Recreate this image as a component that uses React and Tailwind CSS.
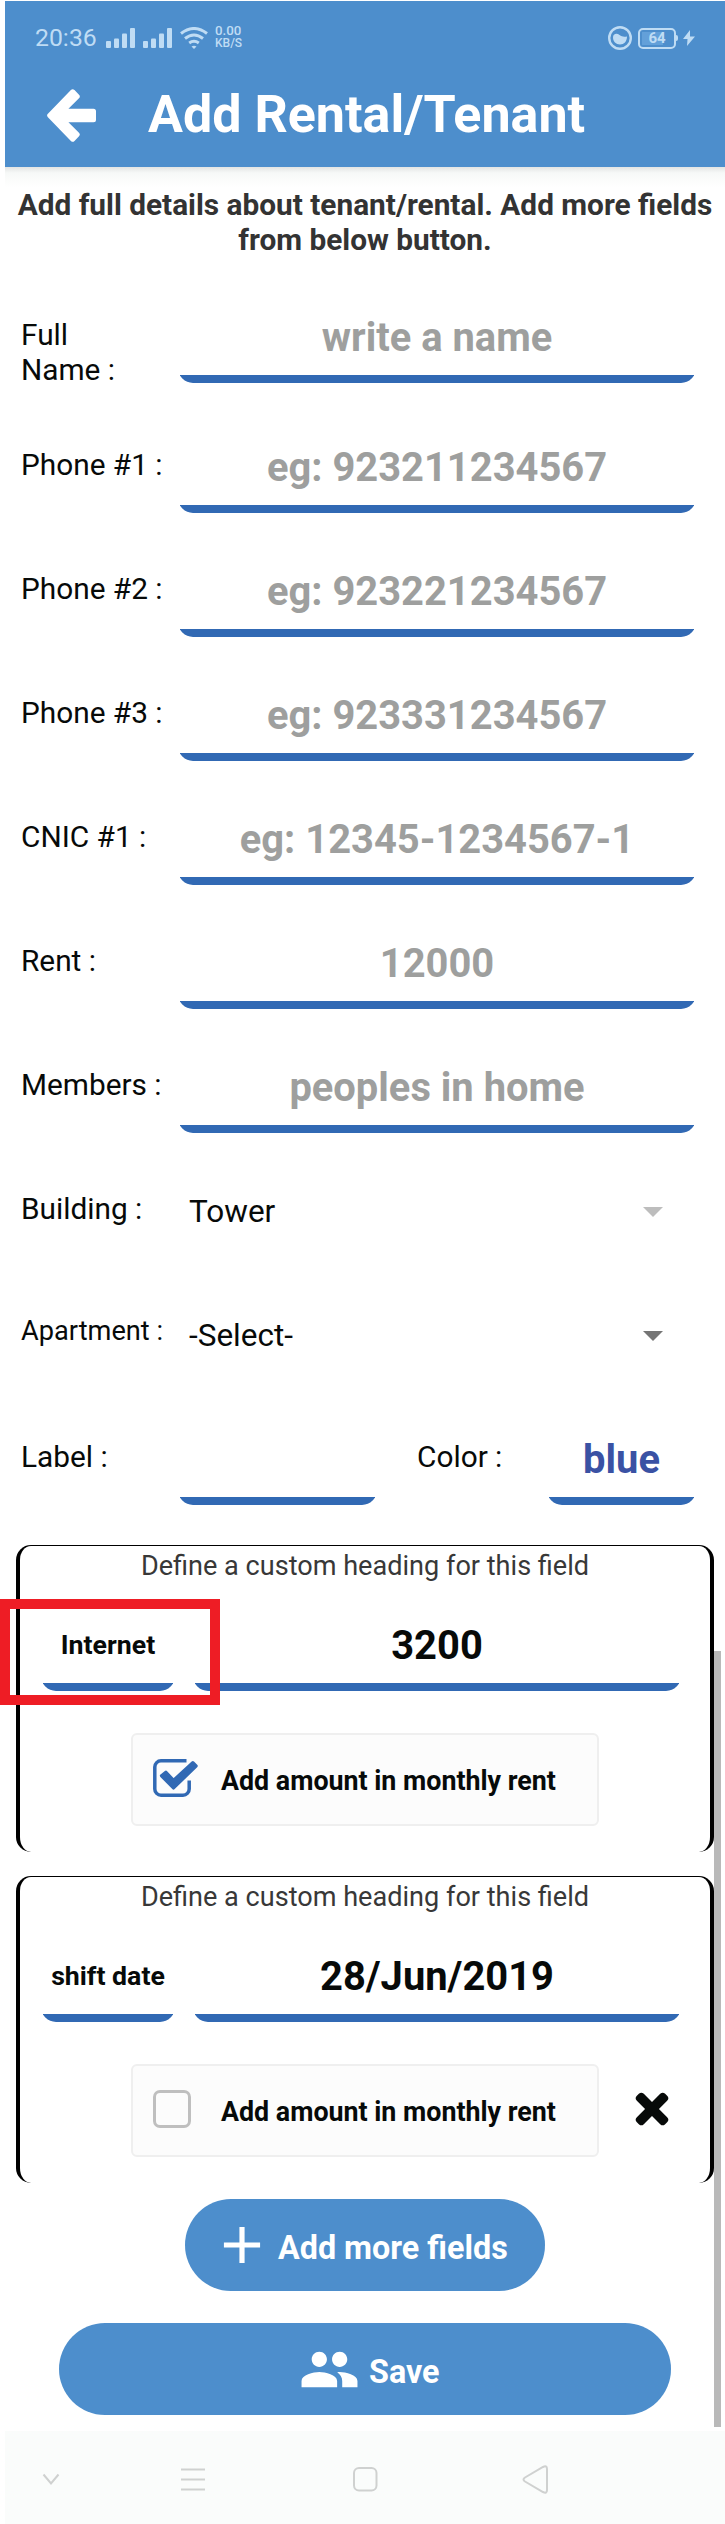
import { MdAdd, MdPeople } from "react-icons/md";

const FIELDS = [
  { label: "Phone #1 :", hint: "eg: 923211234567" },
  { label: "Phone #2 :", hint: "eg: 923221234567" },
  { label: "Phone #3 :", hint: "eg: 923331234567" },
  { label: "CNIC #1 :", hint: "eg: 12345-1234567-1" },
  { label: "Rent :", hint: "12000" },
  { label: "Members :", hint: "peoples in home" },
];

function Underline() {
  return (
    <div className="h-2 shrink-0 overflow-hidden">
      <div className="-mx-[2px] -mt-[22px] h-[30px] rounded-[15px] bg-[#3169b4]" />
    </div>
  );
}

function Input({ className, textClass, children }) {
  return (
    <div className={"flex flex-col " + className}>
      <div className={"flex h-[66px] items-center justify-center whitespace-nowrap pb-[9px] text-[39.9px] leading-[46px] font-bold " + textClass}>
        {children}
      </div>
      <Underline />
    </div>
  );
}

function Label({ className = "w-[159px] text-[29.8px]", children }) {
  return <div className={"mt-[8px] h-[35px] shrink-0 leading-[35px] text-[#070a09] " + className}>{children}</div>;
}

function Field({ label, hint }) {
  return (
    <div className="mt-[50px] flex h-[74px]">
      <Label>{label}</Label>
      <Input className="w-[514px]" textClass="text-[#9e9f9e]">{hint}</Input>
    </div>
  );
}

function SelectRow({ label, labelClass, value, caret }) {
  return (
    <div className="mt-[50px] flex h-[74px]">
      <Label className={labelClass}>{label}</Label>
      <div className="flex h-[58px] w-[514px] items-center pr-[31px] pl-[9px]">
        <span className="grow text-[31.5px] leading-[36px] text-[#070a09]">{value}</span>
        <svg className="h-[10px] w-[20px]" viewBox="0 0 20 10" fill={caret}><path d="M0 0h20L10 10z" /></svg>
      </div>
    </div>
  );
}

function CheckIcon({ checked }) {
  if (!checked) {
    return <div className="h-[38px] w-[38px] shrink-0 rounded-[7px] border-[3.5px] border-[#bfbfbf]" />;
  }
  return (
    <svg className="h-[38px] w-[45px] shrink-0" viewBox="0 0 45 38">
      <path d="M33.500 1.800H8A6.200 6.200 0 0 0 1.800 8v22A6.200 6.200 0 0 0 8 36.200h22A6.200 6.200 0 0 0 36.200 30V21.500" fill="none" stroke="#3169b4" strokeWidth="3.500" />
      <path d="M8.600 16.800L12.900 13.400 20.500 21.500 39.800 3.800 43 7 20.500 28.900z" fill="#3169b4" stroke="#3169b4" strokeWidth="3.400" strokeLinejoin="round" />
    </svg>
  );
}

function CustomCard({ name, value, checked, removable, className }) {
  return (
    <div className={"ml-4 h-[307px] w-[698px] rounded-[15px] border-x-4 border-t border-black bg-white " + className}>
      <div className="mt-[4px] h-[32px] text-center text-[27.1px] leading-[32px] text-[#383838]">Define a custom heading for this field</div>
      <div className="mt-[36px] flex gap-[22px] pl-[23px]">
        <div className="flex w-[130px] flex-col">
          <div className="flex h-[65px] items-center justify-center whitespace-nowrap pb-[11px] text-[26.7px] font-bold text-[#070a09]">{name}</div>
          <Underline />
        </div>
        <Input className="-mt-px w-[484px]" textClass="text-[#070a09]">{value}</Input>
      </div>
      <div className="mt-[42px] flex items-center">
        <div className="ml-[111px] flex h-[93px] w-[468px] items-center rounded-[6px] border-2 border-[#efefef] bg-[#fcfcfc] pl-[20px]">
          <div className="flex w-[68px] -translate-y-[2px]"><CheckIcon checked={checked} /></div>
          <span className="mt-[3px] whitespace-nowrap text-[26.8px] leading-[32px] font-bold text-[#070a09]">Add amount in monthly rent</span>
        </div>
        {removable && (
          <svg className="ml-[36px] h-[34px] w-[34px] -translate-y-[2px]" viewBox="-17 -17 34 34" fill="#070a09">
            <rect x="-20" y="-4.900" width="40" height="9.800" rx="3.500" transform="rotate(45)" />
            <rect x="-20" y="-4.900" width="40" height="9.800" rx="3.500" transform="rotate(-45)" />
          </svg>
        )}
      </div>
    </div>
  );
}

function Signal() {
  return (
    <svg className="h-[20px] w-[29px]" viewBox="0 0 29 20" fill="#bfdcf4">
      <rect x="0" y="13" width="5" height="7" rx="1" />
      <rect x="8" y="10.500" width="5" height="9.500" rx="1" />
      <rect x="16" y="5.500" width="5" height="14.500" rx="1" />
      <rect x="24" y="0" width="5" height="20" rx="1" />
    </svg>
  );
}

function StatusBar() {
  return (
    <div className="flex h-[74px] items-center text-[#bfdcf4]">
      <span className="ml-[30px] w-[71px] text-[24.8px] leading-[28px]">20:36</span>
      <Signal />
      <div className="ml-[8px] flex"><Signal /></div>
      <svg className="ml-[8px] h-[22px] w-[28px]" viewBox="0 0 28 22" fill="none" stroke="#bfdcf4" strokeWidth="3">
        <path d="M1 6.500Q14-3.500 27 6.500M5 11.500q9-7 18 0M9.200 16q4.800-3.500 9.600 0" />
        <path d="M11.500 19.500q2.500-1.500 5 0L14 22z" fill="#bfdcf4" stroke="none" />
      </svg>
      <div className="ml-[7px] w-[30px] -translate-y-[1px] font-medium">
        <div className="h-[12px] text-[13.3px] leading-[12px]">0.00</div>
        <div className="h-[12px] text-[12px] leading-[12px]">KB/S</div>
      </div>
      <svg className="ml-[363px] h-[24px] w-[24px]" viewBox="0 0 24 24">
        <circle cx="12" cy="12" r="10.800" fill="none" stroke="#bfdcf4" strokeWidth="2.400" />
        <path d="M5 11.500c0-4 4-4.500 6.500-2.500 2.500 2 4.500 1.800 7.500 1.500 0 5-3 8-7 8s-7-3-7-7z" fill="#bfdcf4" />
      </svg>
      <div className="ml-[6px] h-[21px] w-[38px] rounded-[5px] border-2 border-[#bfdcf4] p-[2px]">
        <div className="flex h-[13px] items-center justify-center bg-linear-to-r from-[#63a0d9] from-70% to-[#4d8ecc] to-70% text-[15px] leading-none font-bold">64</div>
      </div>
      <div className="h-[6px] w-[2px] rounded-r bg-[#bfdcf4]" />
      <svg className="ml-[5px] h-[16px] w-[12px]" viewBox="0 0 12 16" fill="#bfdcf4"><path d="M7 0L0 9h4.500L4 16l8-9.500H7z" /></svg>
    </div>
  );
}

export default function App() {
  return (
    <div className="relative flex h-[2524px] w-[725px] flex-col overflow-hidden bg-white font-['Roboto',sans-serif] text-black">
      <header className="mt-px ml-[5px] h-[166px] shrink-0 bg-[#4d8ecc]">
        <StatusBar />
        <div className="flex h-[80px] items-center pl-[42px]">
          <svg className="h-[53px] w-[49px]" viewBox="0 0 49 53">
            <path d="M2.700 26.500L25.700 2.800 30.200 7.500 15.400 22.300H46.500V30.700H15.400L30.200 45.500 25.700 50.200z" fill="#fff" stroke="#fff" strokeWidth="5" strokeLinejoin="round" />
          </svg>
          <h1 className="ml-[52px] text-[52px] leading-[60px] font-bold whitespace-nowrap text-white">Add Rental/Tenant</h1>
        </div>
      </header>
      <div className="ml-[5px] h-[20px] shrink-0 bg-linear-to-b from-[#e2e4e3] via-[#f7f9f8] via-30% to-white" />
      <p className="ml-[5px] text-center text-[29.8px] leading-[35px] font-bold whitespace-nowrap text-[#333]">
        Add full details about tenant/rental. Add more fields<br />from below button.
      </p>

      <section className="mt-[52px] h-[1196px] shrink-0 pl-[21px]">
        <div className="flex h-[74px]">
          <Label>Full<br />Name :</Label>
          <Input className="w-[514px]" textClass="text-[#9e9f9e]">write a name</Input>
        </div>
        <div className="h-[6px]" />
        {FIELDS.map((f) => <Field key={f.label} {...f} />)}
        <SelectRow label="Building :" labelClass="w-[159px] text-[29.8px]" value="Tower" caret="#bdbdbd" />
        <SelectRow label="Apartment :" labelClass="w-[159px] text-[27.2px] -translate-y-[1px]" value="-Select-" caret="#757575" />
        <div className="mt-[50px] flex h-[74px]">
          <Label>Label :</Label>
          <Input className="w-[195px]" textClass="" />
          <Label className="ml-[42px] w-[132px] text-[29.8px]">Color :</Label>
          <Input className="w-[145px]" textClass="text-[#3a52a4]">blue</Input>
        </div>
      </section>

      <CustomCard className="mt-[40px] shrink-0" name="Internet" value="3200" checked />
      <CustomCard className="mt-[24px] shrink-0" name="shift date" value="28/Jun/2019" removable />

      <button className="mt-[16px] ml-[185px] flex h-[92px] w-[360px] shrink-0 items-center rounded-full bg-[#4d8ecc] pl-[26px] text-[32.3px] font-bold text-white">
        <MdAdd className="h-[62px] w-[62px] shrink-0" />
        <span className="mt-[6px] ml-[5px] whitespace-nowrap">Add more fields</span>
      </button>
      <button className="mt-[32px] ml-[59px] flex h-[92px] w-[612px] shrink-0 items-center rounded-full bg-[#4d8ecc] pl-[240px] text-[32.3px] font-bold text-white">
        <MdPeople className="h-[61px] w-[61px] shrink-0" />
        <span className="mt-[6px] ml-[9px]">Save</span>
      </button>

      <nav className="mt-[16px] ml-[5px] flex h-[93px] shrink-0 bg-[#fafcfb]">
        <svg className="h-[93px] w-[720px]" viewBox="5 2431 720 93" fill="none" stroke="#cfd1d0" strokeWidth="2">
          <path d="M43.500 2474.500l7.500 9 7.500-9M181 2469.500h24M181 2479.500h24M181 2489.500h24" />
          <rect x="354" y="2468" width="22.500" height="22.500" rx="5" />
          <path d="M525 2477.500l18-10.500q4-2 4 2v21q0 4-4 2l-18-10.500q-3-2 0-4z" />
        </svg>
      </nav>

      <div className="absolute top-[1651px] left-[714px] h-[776px] w-[7px] bg-[#b9b9b9]" />
      <div className="absolute top-[1599px] left-0 h-[106px] w-[220px] border-[10px] border-[#ee1d25]" />
    </div>
  );
}
